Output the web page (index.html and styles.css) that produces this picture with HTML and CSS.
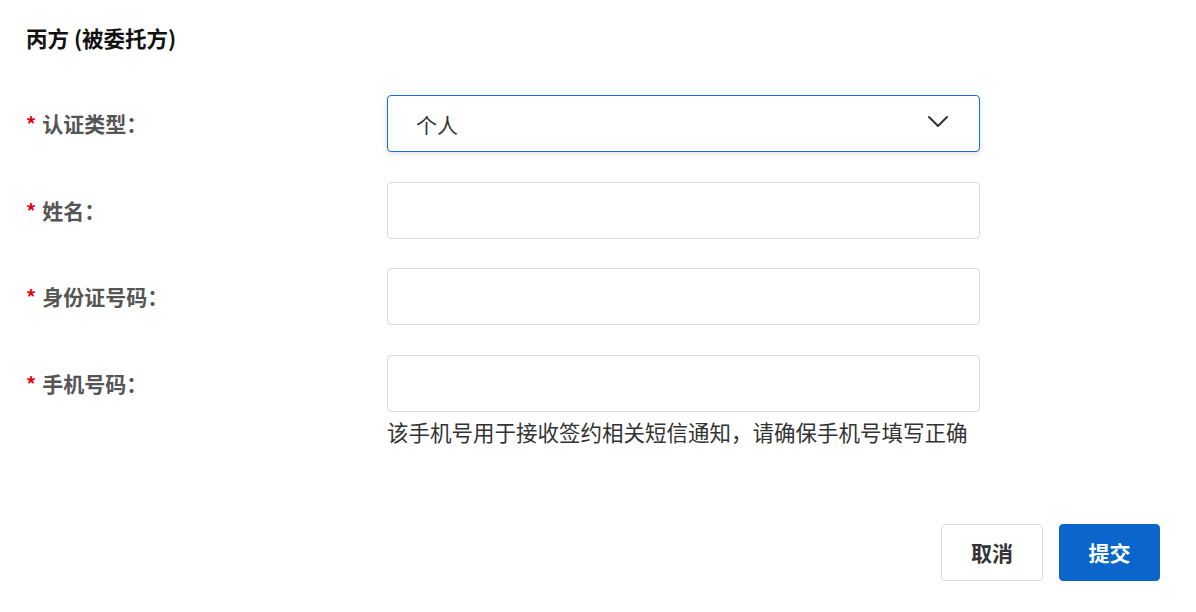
FILE: index.html
```html
<!DOCTYPE html>
<html lang="zh-CN">
<head>
  <meta charset="UTF-8">
  <title>丙方 (被委托方)</title>
  <link rel="stylesheet" href="styles.css">
</head>
<body>
  <div class="page">
    <h2 class="title">丙方 (被委托方)</h2>

    <div class="form">
      <div class="row">
        <label class="label"><span class="req">*</span>认证类型：</label>
        <div class="field">
          <div class="select">
            <span>个人</span>
            <svg class="chevron" width="22" height="14" viewBox="0 0 22 14">
              <path d="M2 2 L11 11 L20 2" fill="none" stroke="#333" stroke-width="2" stroke-linecap="round" stroke-linejoin="round"/>
            </svg>
          </div>
        </div>
      </div>

      <div class="row">
        <label class="label" for="name"><span class="req">*</span>姓名：</label>
        <div class="field">
          <input class="input" id="name" type="text">
        </div>
      </div>

      <div class="row">
        <label class="label" for="idcard"><span class="req">*</span>身份证号码：</label>
        <div class="field">
          <input class="input" id="idcard" type="text">
        </div>
      </div>

      <div class="row">
        <label class="label" for="phone"><span class="req">*</span>手机号码：</label>
        <div class="field">
          <input class="input" id="phone" type="text">
          <p class="hint">该手机号用于接收签约相关短信通知，请确保手机号填写正确</p>
        </div>
      </div>
    </div>

    <div class="actions">
      <button class="btn btn-cancel">取消</button>
      <button class="btn btn-submit">提交</button>
    </div>
  </div>
</body>
</html>
```

FILE: styles.css
```css
body {
  margin: 0;
  background: #ffffff;
  color: #333;
  font-family: "Noto Sans CJK SC", "Noto Sans", sans-serif;
}
.page {
  padding: 24px 36px 0 26px;
}
.title {
  margin: 0;
  font-size: 21.5px;
  line-height: 28px;
  font-weight: 600;
  color: #111;
}
.form {
  margin-top: 43px;
  display: flex;
  flex-direction: column;
  gap: 29.5px;
}
.row {
  display: grid;
  grid-template-columns: 361px 593px;
}
.label {
  font-size: 21px;
  line-height: 57px;
  font-weight: 700;
  color: #555;
}
.req {
  color: #e60012;
  font-size: 20px;
  margin-right: 6px;
}
.select,
.input {
  box-sizing: border-box;
  width: 593px;
  height: 57px;
  border: 1px solid #dcdcdc;
  border-radius: 4px;
  background: #fff;
}
.input {
  display: block;
  margin: 0;
  outline: none;
}
.select {
  display: flex;
  align-items: center;
  justify-content: space-between;
  padding: 0 30px 0 28px;
  border-color: #1a6dd6;
  box-shadow: 0 2px 6px rgba(0, 0, 0, 0.12);
  font-size: 21px;
  color: #333;
}
.chevron {
  margin-top: -3px;
}
.hint {
  margin: 8px 0 0;
  font-size: 21.5px;
  line-height: 24px;
  color: #333;
  white-space: nowrap;
}
.actions {
  margin-top: 80px;
  display: flex;
  justify-content: flex-end;
  gap: 16px;
}
.btn {
  height: 57px;
  border-radius: 4px;
  font-family: inherit;
  font-size: 21px;
  font-weight: 700;
  cursor: pointer;
}
.btn-cancel {
  width: 102px;
  background: #fff;
  border: 1px solid #dcdcdc;
  color: #333;
}
.btn-submit {
  width: 101px;
  background: #0b66cc;
  border: 1px solid #0b66cc;
  color: #fff;
}
```
